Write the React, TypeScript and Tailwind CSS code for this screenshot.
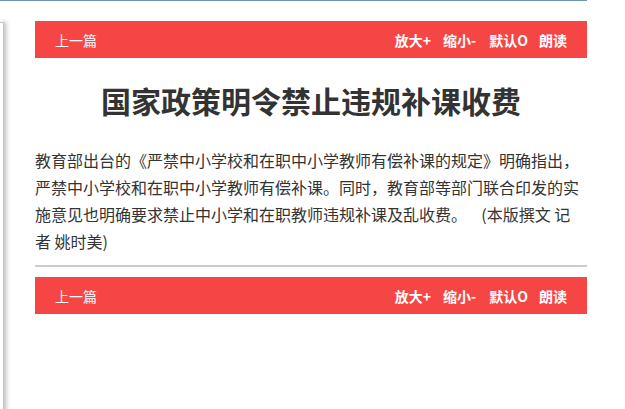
import React from "react";

const font = { fontFamily: '"Noto Sans CJK SC", "Noto Sans", sans-serif' };

function Bar() {
  return (
    <div className="h-[37px] bg-[#f64545] flex items-center justify-between pl-[20px] pr-[20px] text-white text-[14px] leading-none">
      <span>上一篇</span>
      <div className="flex items-center font-bold">
        <span>放大+</span>
        <span className="ml-[12px]">缩小-</span>
        <span className="ml-[13px]">默认O</span>
        <span className="ml-[11px]">朗读</span>
      </div>
    </div>
  );
}

export default function App() {
  return (
    <div className="w-[625px] h-[409px] bg-white overflow-hidden" style={font}>
      <div className="w-[587px] h-px bg-[#7291b7]" />
      <div className="flex">
        <div className="w-[4px] h-[400px] mt-[21px] border-t border-r border-[#c4c4c4] shadow-[2px_0_4px_rgba(0,0,0,0.3)]" />
        <div className="ml-[31px] w-[552px] mt-[20px]">
          <Bar />
          <h1 className="mt-[21px] text-center text-[30px] leading-[42px] font-bold text-[#333333]">
            国家政策明令禁止违规补课收费
          </h1>
          <p className="mt-[26px] text-[16px] leading-[27px] text-[#333333]">
            教育部出台的《严禁中小学校和在职中小学教师有偿补课的规定》明确指出，
            <br />
            严禁中小学校和在职中小学教师有偿补课。同时，教育部等部门联合印发的实施意见也明确要求禁止中小学和在职教师违规补课及乱收费。&nbsp;&nbsp;&nbsp;&nbsp;(本版撰文 记
            <br />
            者 姚时美)
          </p>
          <div className="mt-[10px] h-[2px] bg-[#cccccc]" />
          <div className="mt-[10px]">
            <Bar />
          </div>
        </div>
      </div>
    </div>
  );
}
